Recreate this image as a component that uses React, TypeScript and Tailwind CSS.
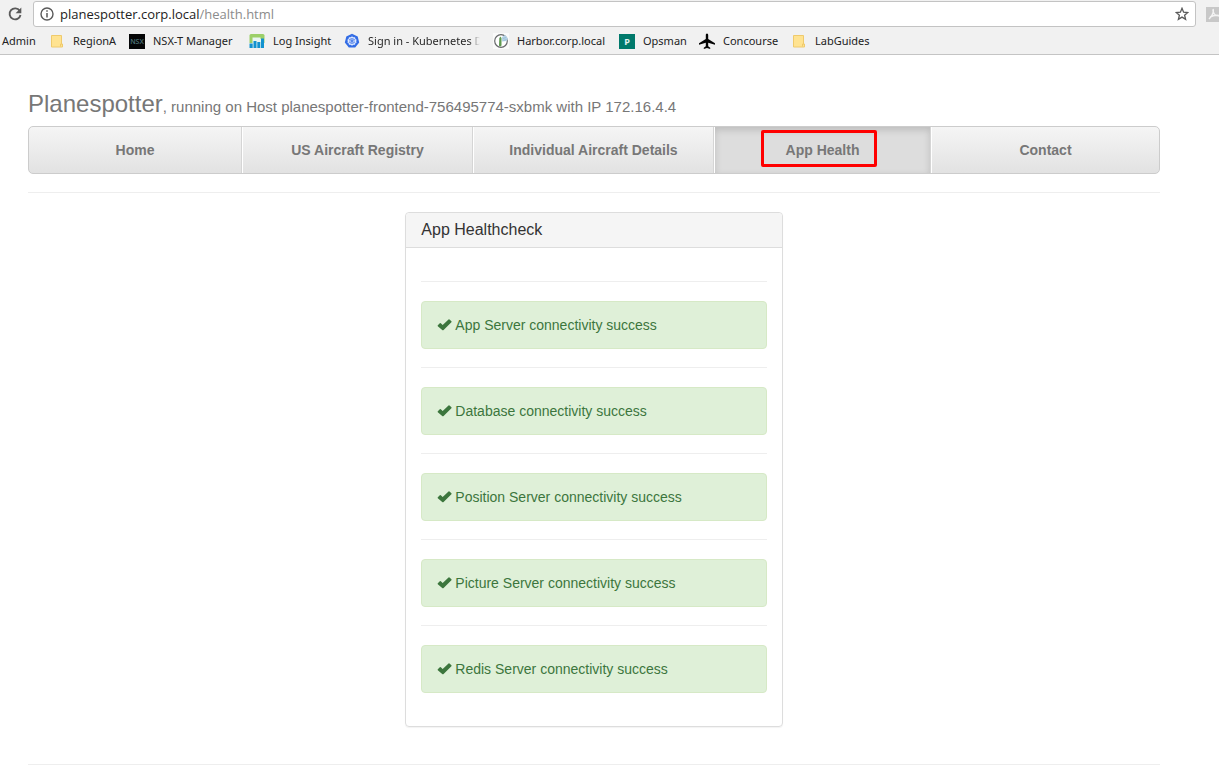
import type { ReactNode } from "react";

const FolderIcon = () => (
  <svg width="16" height="16" viewBox="0 0 16 16" aria-hidden="true">
    <path d="M2.500 2.500h10v8.500h1v3h-11z" fill="#ffe391" stroke="#efca6c" />
    <path d="M11.500 13.500v-2.500h1.500" fill="none" stroke="#efca6c" />
  </svg>
);

const NsxIcon = () => (
  <svg width="16" height="16" viewBox="0 0 16 16" aria-hidden="true">
    <rect y="1" width="16" height="15" fill="#050607" />
    <text x="8" y="11" textAnchor="middle" fontSize="7" fontWeight="600" fontFamily="Open Sans, sans-serif" fill="#4d7378">NSX</text>
  </svg>
);

const LogInsightIcon = () => (
  <svg width="16" height="16" viewBox="0 0 16 16" aria-hidden="true">
    <path d="M2 1h12q1.500 0 1.500 1.500V10H.5V2.500Q.5 1 2 1z" fill="#9ccf68" />
    <path d="M3.500 4.500h8V6H15v9H3.500z" fill="#e9f5f2" />
    <path d="M.5 10.500h3.200V15H.5zM4.500 8h3v7h-3zM8.300 9h3v6h-3zM12 5.500h3V15h-3z" fill="#1292cf" />
  </svg>
);

const KubernetesIcon = () => (
  <svg width="16" height="16" viewBox="0 0 16 16" aria-hidden="true">
    <path d="M8 .8l5.700 2.700 1.500 6.100-4 5H4.800l-4-5 1.500-6.100z" fill="#326ce5" />
    <circle cx="8" cy="8" r="3.500" fill="none" stroke="#e8efff" strokeWidth="1.100" />
    <path d="M8 2.800v10.200M3 7l10 2.200M3 9.200L13 7M5 4l6 8M11 4l-6 8" stroke="#dbe6ff" strokeWidth="0.700" />
    <circle cx="8" cy="8" r="1" fill="#326ce5" />
  </svg>
);

const HarborIcon = () => (
  <svg width="16" height="16" viewBox="0 0 16 16" aria-hidden="true">
    <rect width="16" height="16" fill="#fafafa" />
    <circle cx="8" cy="8" r="6.300" fill="#fff" stroke="#67696b" strokeWidth="1.200" />
    <path d="M9 4l3-2 3 3.500-1.500 2.500-4.500.5z" fill="#b5d3e6" />
    <path d="M6.300 5l1.200-1.500L8.500 5v7.500l-1 1-1.500-.8z" fill="#5f9a50" />
    <path d="M10 5.500l3-1M10.500 7.500l3-1" stroke="#8fb3cc" strokeWidth="0.600" />
  </svg>
);

const OpsmanIcon = () => (
  <svg width="16" height="16" viewBox="0 0 16 16" aria-hidden="true">
    <rect y="1" width="16" height="15" fill="#00796b" />
    <text x="8" y="12" textAnchor="middle" fontSize="9" fontWeight="700" fontFamily="Open Sans, sans-serif" fill="#e4f3f1">P</text>
  </svg>
);

const PlaneIcon = () => (
  <svg width="16" height="16" viewBox="0 0 16 16" aria-hidden="true">
    <path d="M8 .5c.8 0 1.200.8 1.200 1.700v3.900L16 10.300v1.500l-6.800-2.100v3.600l2 1.500V16L8 15l-3.200 1v-1.200l2-1.500V9.700L0 11.800v-1.500l6.800-4.200V2.200C6.800 1.300 7.200.5 8 .5z" fill="#050505" />
  </svg>
);

const CheckIcon = () => (
  <svg className="shrink-0" width="15" height="12" viewBox="0 0 15 12" aria-hidden="true">
    <path d="M.8 6.300L2.800 4.300q.5-.4 1 0l1.900 1.700L11.500.5q.5-.4 1 0l1.900 1.700q.5.500 0 1L6.600 11q-.7.500-1.400 0L.8 7.300q-.4-.5 0-1z" fill="#3c763d" />
  </svg>
);

const bookmarks: { label: string; icon: ReactNode; width: string }[] = [
  { label: "RegionA", icon: <FolderIcon />, width: "w-20" },
  { label: "NSX-T Manager", icon: <NsxIcon />, width: "w-[120px]" },
  { label: "Log Insight", icon: <LogInsightIcon />, width: "w-[95px]" },
  { label: "Sign in - Kubernetes D", icon: <KubernetesIcon />, width: "w-[149px]" },
  { label: "Harbor.corp.local", icon: <HarborIcon />, width: "w-[126px]" },
  { label: "Opsman", icon: <OpsmanIcon />, width: "w-20" },
  { label: "Concourse", icon: <PlaneIcon />, width: "w-[92px]" },
  { label: "LabGuides", icon: <FolderIcon />, width: "w-24" },
];

const tabs = ["Home", "US Aircraft Registry", "Individual Aircraft Details", "App Health", "Contact"];

const checks = ["App Server", "Database", "Position Server", "Picture Server", "Redis Server"];

function BrowserBar() {
  return (
    <header className="border-b border-[#c4c4c4] bg-[#f1f1f1] pt-px font-['Open_Sans',sans-serif]">
      <div className="flex h-[26px] items-center overflow-hidden">
        <button type="button" aria-label="Reload" className="flex w-[33px] shrink-0 justify-center pr-1">
          <svg width="16" height="16" viewBox="0 0 16 16">
            <path d="M12.700 4.800A5.500 5.500 0 1 0 13.500 9" fill="none" stroke="#5a5a5a" strokeWidth="1.900" />
            <path d="M14.300 1.500v5.700H8.600z" fill="#5a5a5a" />
          </svg>
        </button>
        <div className="flex h-[26px] min-w-0 flex-1 items-center rounded-[3px] border border-[#c3c3c3] bg-white px-[6px]">
          <svg className="shrink-0" width="14" height="14" viewBox="0 0 14 14" aria-hidden="true">
            <circle cx="7" cy="7" r="6" fill="none" stroke="#5a5a5a" strokeWidth="1.400" />
            <path d="M7 6v4.500M7 3.300v1.500" stroke="#5a5a5a" strokeWidth="1.500" />
          </svg>
          <div role="textbox" aria-label="Address" className="min-w-0 flex-1 truncate pl-[6px] text-[13px] leading-5 text-[#222]">
            planespotter.corp.local<span className="text-[#8c8c8c]">/health.html</span>
          </div>
          <button type="button" aria-label="Bookmark this page">
            <svg width="14" height="14" viewBox="0 0 14 14">
              <path d="M7 1.300l1.600 3.900 4.200.3-3.200 2.700 1 4.100L7 10.100l-3.600 2.200 1-4.100L1.200 5.500l4.200-.3z" fill="none" stroke="#5a5a5a" strokeWidth="1.300" />
            </svg>
          </button>
        </div>
        <div className="flex w-[23px] shrink-0 justify-end">
          <svg width="13" height="15" viewBox="0 0 13 15" aria-hidden="true">
            <rect width="13" height="15" fill="#c8c8c8" />
            <path d="M7 2c1 3-1 7-4 10M7 3c0 3 2 6 6 6M4 10c2-1 5-2 9-1.500" fill="none" stroke="#f3f3f3" strokeWidth="1.500" />
          </svg>
        </div>
      </div>
      <nav aria-label="Bookmarks" className="flex h-[27px] items-center overflow-hidden pt-px pl-[2px] font-['Noto_Sans',sans-serif] text-[11px] text-[#222]">
        <a href="#admin" className="w-[47px] shrink-0">Admin</a>
        {bookmarks.map((b) => (
          <a key={b.label} href="#bookmark" className={`flex shrink-0 items-center gap-2 ${b.width}`}>
            <span className="shrink-0">{b.icon}</span>
            {b.label.endsWith(" D") ? (
              <span className="w-28 overflow-hidden bg-linear-to-r from-[#222] from-90% to-transparent bg-clip-text whitespace-nowrap text-transparent">
                {b.label}
              </span>
            ) : (
              <span className="whitespace-nowrap">{b.label}</span>
            )}
          </a>
        ))}
      </nav>
    </header>
  );
}

export default function App() {
  return (
    <div className="min-h-screen bg-white font-['Liberation_Sans',Arial,sans-serif] text-[#333]">
      <BrowserBar />
      <main className="mr-[59px] ml-7 pt-[35px]">
        <h1 className="text-2xl leading-7 text-[#777]">
          Planespotter<small className="text-[15px]">, running on Host planespotter-frontend-756495774-sxbmk with IP 172.16.4.4</small>
        </h1>
        <nav
          aria-label="Main"
          className="mt-[5px] grid h-12 grid-cols-[213fr_231fr_241fr_217fr_228fr] overflow-hidden rounded-[5px] border border-[#ccc] bg-linear-to-b from-[#f5f5f5] to-[#e2e2e2]"
        >
          {tabs.map((tab) => {
            const active = tab === "App Health";
            return (
              <a
                key={tab}
                href="#tab"
                aria-current={active ? "page" : undefined}
                className={`relative flex items-center justify-center border-l border-l-white text-sm font-bold text-[#777] not-last:border-r not-last:border-r-[#d5d5d5] first:border-l-0 ${
                  active ? "bg-[#ddd] shadow-[inset_0_3px_7px_rgba(0,0,0,0.15)]" : ""
                }`}
              >
                {tab}
                {active && <span className="absolute top-[3px] left-[46px] h-[37px] w-[116px] rounded-xs border-3 border-[#f00]" />}
              </a>
            );
          })}
        </nav>
        <hr className="mt-[18px] border-[#eee]" />
        <section className="mx-auto mt-[19px] w-1/3 rounded-sm border border-[#ddd] shadow-[0_1px_1px_rgba(0,0,0,0.05)]">
          <h2 className="rounded-t-sm border-b border-[#ddd] bg-[#f5f5f5] px-[15px] py-[7px] text-base leading-5">App Healthcheck</h2>
          <div className="px-[15px] py-[33px]">
            <ul className="flex flex-col gap-[18px]">
              {checks.map((name) => (
                <li key={name} className="border-t border-[#eee] pt-[19px]">
                  <div className="flex h-12 items-center gap-[3px] rounded-sm border border-[#d6e9c6] bg-[#dff0d8] pl-[15px] text-sm text-[#3c763d]">
                    <CheckIcon />
                    <span>{name} connectivity success</span>
                  </div>
                </li>
              ))}
            </ul>
          </div>
        </section>
        <hr className="mt-[37px] border-[#eee]" />
      </main>
    </div>
  );
}
